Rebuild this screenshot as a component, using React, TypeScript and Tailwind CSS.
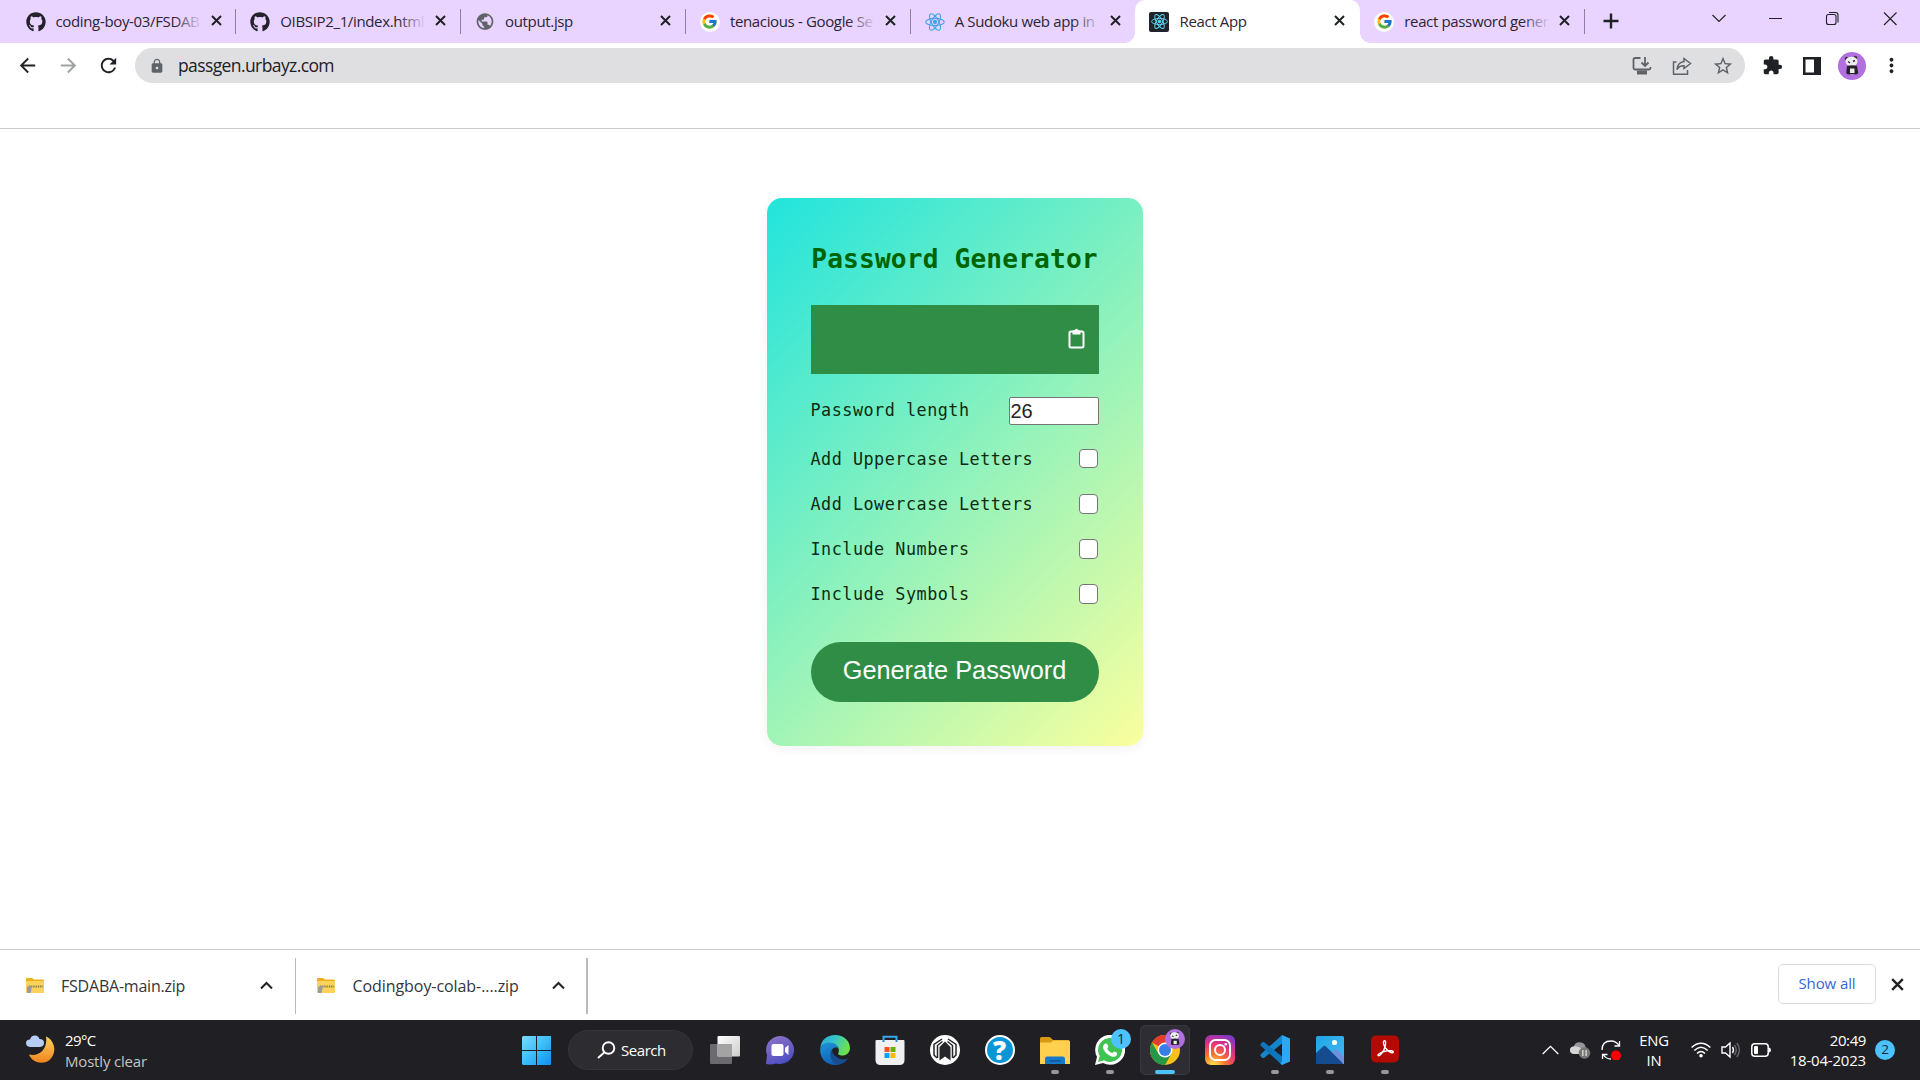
import React from 'react';
import { FaGithub } from 'react-icons/fa';
import { FcGoogle } from 'react-icons/fc';
import { MdArrowBack, MdArrowForward, MdRefresh, MdLock, MdStarOutline, MdExtension, MdMoreVert, MdPublic } from 'react-icons/md';

const Cross = ({ s = 11, w = 2, c = '#202124' }: { s?: number; w?: number; c?: string }) => (
  <svg width={s} height={s} viewBox="0 0 11 11" className="shrink-0">
    <path d="M1 1L10 10M10 1L1 10" stroke={c} strokeWidth={w} fill="none" />
  </svg>
);

const Atom = ({ c, s = 20 }: { c: string; s?: number }) => (
  <svg width={s} height={s + 2} viewBox="0 0 20 22" fill="none" stroke={c} strokeWidth="1.1">
    <ellipse cx="10" cy="11" rx="9.3" ry="3.6" />
    <ellipse cx="10" cy="11" rx="9.3" ry="3.6" transform="rotate(60 10 11)" />
    <ellipse cx="10" cy="11" rx="9.3" ry="3.6" transform="rotate(120 10 11)" />
    <circle cx="10" cy="11" r="1.6" fill={c} />
  </svg>
);

const Google = () => (
  <div className="flex h-5 w-5 items-center justify-center rounded-full bg-white"><FcGoogle size={17} /></div>
);

const Panda = ({ s }: { s: number }) => (
  <svg width={s} height={s} viewBox="0 0 28 28">
    <circle cx="14" cy="14" r="14" fill="#b26fe0" />
    <circle cx="8.500" cy="6.500" r="1.700" fill="#333" /><circle cx="17.500" cy="5.500" r="1.700" fill="#333" />
    <ellipse cx="13.500" cy="9.500" rx="6" ry="4.800" fill="#eee" />
    <path d="M10 9.500L12 11M15 9.500L17 8.500" stroke="#333" strokeWidth="1.500" />
    <path d="M9 14q5-1.500 10 0l1.200 7q-2 2.500-4 1h-4q-2 1.500-4-1z" fill="#252327" />
    <path d="M12 16.500h4.500v4.500h-4.500z" fill="#eee" />
  </svg>
);

function Tab({ icon, label, active, line = true, fade = true }: { icon: React.ReactNode; label: string; active?: boolean; line?: boolean; fade?: boolean }) {
  return (
    <div className={`relative flex h-[43px] w-[224.8px] shrink-0 items-center pl-[14px] ${active ? 'rounded-t-[10px] bg-white' : ''}`}>
      {active && <div className="absolute bottom-0 -left-[10px] h-[10px] w-[10px] bg-[radial-gradient(circle_at_0_0,#e8d4ff_9.500px,#fff_10px)]" />}
      {active && <div className="absolute -right-[10px] bottom-0 h-[10px] w-[10px] bg-[radial-gradient(circle_at_100%_0,#e8d4ff_9.500px,#fff_10px)]" />}
      <div className="flex w-5 shrink-0 justify-center">{icon}</div>
      <div className="relative -top-px ml-[10px] h-5 w-[146px] text-[15px] leading-5 tracking-[-0.35px] whitespace-nowrap text-[#2b2435]">
        {label}
        {fade && <div className="absolute top-0 right-0 h-5 w-7 bg-linear-to-r from-[#e8d4ff]/0 to-[#e8d4ff]" />}
      </div>
      <div className="relative -top-px ml-[9px] flex"><Cross /></div>
      {line && <div className="absolute top-[9px] right-0 h-[25px] w-px bg-[#8f80a2]" />}
    </div>
  );
}

function Tabs() {
  return (
    <div className="flex h-[43px] bg-[#e8d4ff] pl-[11.500px]">
      <Tab icon={<FaGithub size={20} color="#24202c" />} label="coding-boy-03/FSDAB" />
      <Tab icon={<FaGithub size={20} color="#24202c" />} label="OIBSIP2_1/index.html" />
      <Tab icon={<MdPublic size={21} color="#5f6368" />} label="output.jsp" fade={false} />
      <Tab icon={<Google />} label="tenacious - Google Se" />
      <Tab icon={<Atom c="#46a3e8" />} label="A Sudoku web app in" line={false} />
      <Tab icon={<div className="flex h-5 w-5 items-center justify-center rounded-xs bg-[#20232a]"><Atom c="#61dafb" s={17} /></div>} label="React App" active line={false} fade={false} />
      <Tab icon={<Google />} label="react password gener" />
      <svg className="mt-[13px] ml-[18px]" width="16" height="16" viewBox="0 0 16 16" stroke="#202124" strokeWidth="2.4"><path d="M8 0.5V15.500M0.500 8H15.500" /></svg>
      <svg className="mt-[9px] ml-[92px]" width="200" height="20" viewBox="0 0 200 20" fill="none" stroke="#202124" strokeWidth="1.1">
        <path d="M1.500 6L8 12.500L14.500 6M58 9.500H71" />
        <rect x="115.500" y="5.500" width="9.500" height="10" rx="2" />
        <path d="M118 3.500h6.500q2.500 0 2.500 2.500v7.500" />
        <path d="M173 3.500L185.500 16M185.500 3.500L173 16" />
      </svg>
    </div>
  );
}

function Toolbar() {
  return (
    <div className="flex h-[45px] items-center bg-white">
      <div className="ml-[16px] flex items-center gap-[17.500px]">
        <MdArrowBack size={23} color="#202124" />
        <MdArrowForward size={23} color="#a0a1a3" />
        <MdRefresh size={23} color="#202124" />
      </div>
      <div className="ml-[15px] flex h-[35px] w-[1610px] shrink-0 items-center rounded-full bg-[#dfdfe1] pl-[14px]">
        <MdLock size={16} color="#5f6368" />
        <span className="ml-[13px] text-[17.5px] leading-none tracking-[-0.600px] text-[#202124]">passgen.urbayz.com</span>
        <div className="mr-[11px] ml-auto flex items-center gap-[20px]">
          <svg width="20" height="20" viewBox="0 0 20 20" fill="none" stroke="#5f6368" strokeWidth="1.800">
            <path d="M8.500 2H3Q1.500 2 1.500 3.500V12Q1.500 13.500 3 13.500H17Q18.500 13.500 18.500 12V11M13 1V9.500M9.500 6.500L13 10L16.500 6.500" />
            <path d="M5 16.500H15" strokeWidth="4" />
          </svg>
          <svg width="20" height="20" viewBox="0 0 20 20" fill="none" stroke="#5f6368" strokeWidth="1.500">
            <path d="M4.500 6H1.500V18.200H15.500V14M12 2.500L18.500 7.500L12 12.500V9.800Q7.500 9.500 5 13.500Q5.500 6.500 12 5.500Z" />
          </svg>
          <MdStarOutline size={22} color="#5f6368" />
        </div>
      </div>
      <div className="ml-[17px] flex items-center">
        <MdExtension size={21} color="#202124" />
        <svg className="ml-[20px]" width="18" height="18" viewBox="0 0 18 18"><path d="M0 0H18V18H0ZM2.500 2.500V15.500H11V2.500Z" fill="#202124" fillRule="evenodd" /></svg>
        <div className="ml-[17px]"><Panda s={28} /></div>
        <div className="ml-[14px]"><MdMoreVert size={23} color="#202124" /></div>
      </div>
    </div>
  );
}

function Option({ label }: { label: string }) {
  return (
    <div className="flex h-[45.2px] items-center justify-between pr-[0.500px]">
      <label className="mt-[1px] font-['DejaVu_Sans_Mono',monospace] text-[16.800px] leading-none tracking-[0.500px] text-[#0c2c12]">{label}</label>
      <div className="h-[19.500px] w-[19.500px] rounded-[4px] border border-[#767676] bg-white" />
    </div>
  );
}

function Card() {
  return (
    <div className="mt-[69px] ml-[766.500px] h-[547.500px] w-[376px] rounded-[15px] bg-[linear-gradient(135deg,#21e4dc,#faff9e)] px-[44px] pt-[43px] shadow-[0_2px_12px_rgba(0,0,0,0.06)]">
      <h2 className="h-[64px] pt-[1px] text-center font-['DejaVu_Sans_Mono',monospace] text-[26.200px] leading-[34px] font-bold tracking-[0.15px] whitespace-nowrap text-[#006400]">Password Generator</h2>
      <div className="flex h-[69px] items-center justify-end bg-[#308d46] pr-[14px] pb-[2px]">
        <svg width="17" height="21" viewBox="0 0 17 21" fill="none" stroke="#fff" strokeWidth="2">
          <rect x="1.500" y="3.500" width="14" height="16" rx="1.500" />
          <path d="M4.500 2.500H6.300Q8.500-.8 10.700 2.500H12.500V6.500H4.500Z" fill="#fff" stroke="none" />
        </svg>
      </div>
      <div className="mt-[23px] flex h-[28px] items-center justify-between">
        <label className="-mt-[2px] font-['DejaVu_Sans_Mono',monospace] text-[16.800px] leading-none tracking-[0.500px] text-[#0c2c12]">Password length</label>
        <div className="flex h-[28px] w-[90px] items-center rounded-[2px] border border-[#767676] bg-white pb-px pl-px font-['Liberation_Sans',sans-serif] text-[20px] leading-none text-[#222]">26</div>
      </div>
      <div className="mt-[11px] h-[182px]">
        <Option label="Add Uppercase Letters" />
        <Option label="Add Lowercase Letters" />
        <Option label="Include Numbers" />
        <Option label="Include Symbols" />
      </div>
      <button className="mt-[24px] block h-[60px] w-full rounded-full bg-[#308d46] pb-[2px] font-['Liberation_Sans',sans-serif] text-[25.300px] leading-none text-white">Generate Password</button>
    </div>
  );
}

const Zip = () => (
  <svg width="18" height="16" viewBox="0 0 18 16">
    <path d="M0 1Q0 0 1 0H6L8 1.500H17Q18 1.500 18 3V6H0Z" fill="#e9b01c" />
    <rect y="3" width="18" height="12" rx="0.800" fill="#fbd35c" />
    <path d="M3 8.500H17.500" stroke="#77715e" strokeWidth="2" strokeDasharray="1 0.800" />
    <path d="M1 15V10Q1 8 3 8H5.500V11L4.500 15Z" fill="#9b9b9b" />
  </svg>
);
const Up = () => (
  <svg width="13" height="9" viewBox="0 0 13 9" fill="none" stroke="#202124" strokeWidth="2"><path d="M1 7.500L6.500 2L12 7.500" /></svg>
);

function Shelf() {
  return (
    <div className="flex h-[71px] border-t border-[#c9cacc] bg-white text-[#33353a]">
      <div className="mt-[8px] flex h-[56px] w-[296px] items-center border-r border-[#b9babc] pb-px pl-[26px]">
        <Zip /><span className="ml-[17px] w-[199px] text-[16px] tracking-[-0.22px]">FSDABA-main.zip</span><Up />
      </div>
      <div className="mt-[8px] flex h-[56px] w-[292px] items-center border-r-2 border-[#b9babc] pb-px pl-[21px]">
        <Zip /><span className="ml-[17.500px] w-[199px] text-[16px] tracking-[-0.07px]">Codingboy-colab-....zip</span><Up />
      </div>
      <div className="mt-[14px] mr-[16px] ml-auto flex h-[40px] items-center">
        <div className="mr-[15px] flex h-[40px] w-[98px] items-center justify-center rounded-[5px] border border-[#dadce0] pb-px text-[15px] font-medium tracking-[-0.1px] text-[#3367d6]">Show all</div>
        <Cross s={13} w={2} />
      </div>
    </div>
  );
}

const Edge = () => (
  <svg width="30" height="30" viewBox="0 0 30 30">
    <defs>
      <linearGradient id="e1" x1="0" y1="0" x2="1" y2="0.400"><stop offset="0" stopColor="#2aa6df" /><stop offset="0.500" stopColor="#36c6c5" /><stop offset="1" stopColor="#6be04f" /></linearGradient>
      <linearGradient id="e2" x1="0" y1="0" x2="0.500" y2="1"><stop offset="0" stopColor="#2196dd" /><stop offset="1" stopColor="#0f5eb0" /></linearGradient>
    </defs>
    <path d="M0.300 13C1 5 7 0 15 0C24 0 30 6 30 13C30 18 26 20.500 22.500 20.500C19 20.500 17.500 19.500 18.500 17.500C20.500 13 15 8 9 8C5 8 2 10 0.300 13Z" fill="url(#e1)" />
    <path d="M0.200 13.500C2 9.500 5.500 7.500 9 7.500C14 7.500 18 10.500 18.500 13C12 11 10.500 16 12 20C14 25.500 20 28 24 26.200C21.500 28.800 18.500 30 15 30C6 30-.6 23 0.200 13.500Z" fill="url(#e2)" />
    <path d="M12.300 14C9 18 9.500 26 17 29.800C21.500 29.500 25.500 27.500 28 23.200C24.500 25 20 25 16 21.500C13 19 11.500 17 12.300 14Z" fill="#164d91" />
  </svg>
);

function Pinned({ children, dot }: { children: React.ReactNode; dot?: boolean }) {
  return (
    <div className="relative flex h-[60px] w-[55px] shrink-0 items-center justify-center">
      {children}
      {dot && <div className="absolute bottom-[6px] left-[23.500px] h-1 w-2 rounded-full bg-[#98979c]" />}
    </div>
  );
}

function Taskbar() {
  return (
    <div className="flex h-[60px] bg-[#201f23] text-white">
      <div className="flex w-[509px] pl-[25px]">
        <svg className="mt-[14px]" width="30" height="30" viewBox="0 0 30 30">
          <defs><linearGradient id="moon" x1="0" y1="0" x2="0" y2="1"><stop offset="0" stopColor="#ffd35a" /><stop offset="1" stopColor="#ef8420" /></linearGradient></defs>
          <path d="M21 2.500C31 7 32 20 24 26.500C17 31 7 28.500 4 20.500C15 23 23 14 21 2.500Z" fill="url(#moon)" />
          <path d="M5 13Q1 12.500 1 9Q1 5.500 5 5.500Q6 1.500 10 1.500Q13.500 1.500 14.500 5Q19 5 19 9Q19 12.500 15 13Z" fill="#b8cdf4" />
        </svg>
        <div className="mt-[10px] ml-[10px] text-[15px] leading-[20.500px] tracking-[-0.18px]"><div className="tracking-[-0.600px]">29°C</div><div className="text-[#c5c5c5]">Mostly clear</div></div>
      </div>
      <Pinned>
        <svg width="29" height="29" viewBox="0 0 29 29"><defs><linearGradient id="win" gradientUnits="userSpaceOnUse" x1="0" y1="0" x2="29" y2="29"><stop offset="0" stopColor="#7bdcff" /><stop offset="0.500" stopColor="#3cbdf8" /><stop offset="1" stopColor="#0a90f5" /></linearGradient></defs><path d="M1 0H14V14H0V1ZM15 0H29V14H15ZM0 15H14V29H1L0 28ZM15 15H29V29H15Z" fill="url(#win)" /></svg>
      </Pinned>
      <div className="mt-[10px] mr-[4px] ml-[4px] flex h-[40px] w-[125px] items-center rounded-full border border-[#353439] bg-[#2d2c31] pl-[28px]">
        <svg width="19" height="18" viewBox="0 0 19 18" fill="none" stroke="#fff" strokeWidth="1.900"><circle cx="11.500" cy="7" r="5.800" /><path d="M7.500 11.200L1 17" /></svg>
        <span className="ml-[5px] text-[15px] tracking-[-0.450px]">Search</span>
      </div>
      <Pinned>
        <svg width="30" height="28" viewBox="0 0 30 28"><defs><linearGradient id="tv" x1="0" y1="0" x2="1" y2="1"><stop offset="0" stopColor="#fff" /><stop offset="1" stopColor="#ccc" /></linearGradient></defs><rect y="8" width="22" height="20" rx="1" fill="#6b6b6d" /><rect x="7.500" y="0" width="22.500" height="20.500" rx="1" fill="url(#tv)" /><path d="M7.500 8H22V20.500H7.500Z" fill="#a3a3a4" /></svg>
      </Pinned>
      <Pinned>
        <svg width="30" height="30" viewBox="0 0 30 30"><defs><linearGradient id="chat" x1="0" y1="0" x2="0.500" y2="1"><stop offset="0" stopColor="#9276c6" /><stop offset="1" stopColor="#4f4fc4" /></linearGradient></defs><path d="M15 1A14.300 14 0 1 1 11 28.500Q6 30 1 29L2 20A14 14 0 0 1 15 1Z" fill="url(#chat)" /><rect x="6.500" y="9" width="12" height="12" rx="2" fill="#fff" /><path d="M20 13L23.500 10V20L20 17Z" fill="#fff" /></svg>
      </Pinned>
      <Pinned><Edge /></Pinned>
      <Pinned>
        <svg width="30" height="30" viewBox="0 0 30 30"><path d="M8.500 8V1.800H21.500V8" fill="none" stroke="#35aae8" strokeWidth="2" /><path d="M0.500 6Q0.500 5 1.500 5H28.500Q29.500 5 29.500 6V25Q29.500 30 24.500 30H5.500Q0.500 30 0.500 25Z" fill="#f0f0f0" /><path d="M8.500 5V7M21.500 5V7" stroke="#2788d2" strokeWidth="2" /><path d="M9.500 12H14.500V17H9.500Z" fill="#f25022" /><path d="M15.500 12H20.500V17H15.500Z" fill="#6dad00" /><path d="M9.500 18H14.500V23H9.500Z" fill="#00a4ef" /><path d="M15.500 18H20.500V23H15.500Z" fill="#ffb900" /></svg>
      </Pinned>
      <Pinned>
        <svg width="30" height="30" viewBox="0 0 30 30"><circle cx="15" cy="15" r="15" fill="#fff" /><g fill="none" stroke="#26252a"><path d="M12 4L4 9.500V20L7 23M18 4L26 9.500V20L23 23" strokeWidth="1.500" /><path d="M12.500 6.500L7.500 10.500V23M17.500 6.500L22.500 10.500V23" strokeWidth="1.500" /></g><path d="M9.500 12L15 6.500L20.500 12V25.500L15 21.500L9.500 25.500Z" fill="#26252a" /></svg>
      </Pinned>
      <Pinned>
        <div className="flex h-[30px] w-[30px] items-center justify-center rounded-full border-2 border-white bg-[#0a96d6] font-['Open_Sans',sans-serif] text-[26px] leading-none font-extrabold">?</div>
      </Pinned>
      <Pinned dot>
        <svg width="30" height="27" viewBox="0 0 30 27"><path d="M0 1.500Q0 0 1.500 0H9Q10 0 11 1L13 3H28Q30 3 30 5V10H0Z" fill="#d89a13" /><path d="M0 5.500H11L13 3.500H28.500Q30 3.500 30 5V27H0Z" fill="#fed04d" /><path d="M5 27V22Q5 19.500 7.500 19.500H22.500Q25 19.500 25 22V27Z" fill="#1777c8" /><path d="M9.500 24H20.500" stroke="#0c579a" strokeWidth="1.500" /></svg>
      </Pinned>
      <Pinned dot>
        <svg width="30" height="30" viewBox="0 0 30 30"><path d="M0 30L2 22A15 15 0 1 1 8 28Z" fill="#fff" /><path d="M3 27L4.700 21A12 12 0 1 1 9 25.300Z" fill="#3fc351" /><path d="M10.500 8.500C12 8 12.500 9 13.300 11.500C13.500 12.500 12 13.200 12.300 14C13.500 16 15 17.300 17 18C18 18.200 18.500 16.200 19.500 16.500C22 17.500 22.500 18 22 19.500C21 22 18.500 22.200 16 21.200C12 19.700 9.700 17 8.300 14C7.500 11.500 8.500 9 10.500 8.500Z" fill="#fff" /></svg>
        <div className="absolute top-[9px] left-[29px] flex h-5 w-5 items-center justify-center rounded-full bg-[#4cc2ff] text-[14px] leading-none text-[#152a36]">1</div>
      </Pinned>
      <div className="relative flex h-[60px] w-[55px] shrink-0 items-center justify-center">
        <div className="absolute top-[5px] left-[2.500px] h-[50px] w-[50px] rounded-[5px] border border-[#39383d] bg-[#2e2d33]" />
        <svg className="relative" width="30" height="30" viewBox="0 0 30 30"><circle cx="15" cy="15" r="15" fill="#fbc116" /><path d="M15 15L2 7.500A15 15 0 0 1 28 7.500H15Z" fill="#e33b2e" /><path d="M2 7.500A15 15 0 0 0 15 30L21.500 18.800L15 15L8.500 18.800Z" fill="#279847" /><circle cx="15" cy="15" r="7.500" fill="#fff" /><circle cx="15" cy="15" r="6" fill="#397ee8" /></svg>
        <div className="absolute top-[9px] left-[28px]"><Panda s={20} /></div>
        <div className="absolute bottom-[6px] left-[17.500px] h-1 w-5 rounded-full bg-[#4cc2ff]" />
      </div>
      <Pinned>
        <div className="flex h-[30px] w-[30px] items-center justify-center rounded-[6px] bg-[radial-gradient(circle_at_28%_105%,#ffd54a_8%,#f9752f_32%,#e2317f_62%,#8338c5_88%,#5a50d8_100%)]">
          <svg width="22" height="22" viewBox="0 0 22 22" fill="none" stroke="#fff" strokeWidth="2"><rect x="1" y="1" width="20" height="20" rx="5.500" /><circle cx="11" cy="11" r="5" /><circle cx="16.800" cy="5.200" r="1.300" fill="#fff" stroke="none" /></svg>
        </div>
      </Pinned>
      <Pinned dot>
        <svg width="30" height="30" viewBox="0 0 30 30"><path d="M22 0L0.500 19.500V21L2.500 23L4 23L22 8.500Z" fill="#1686cc" /><path d="M22 30L0.500 10.500V9L2.500 7L4 7L22 21.500Z" fill="#0f76bd" /><path d="M22 0L30 3.500V26.500L22 30L20.500 28.500L22 26Z" fill="#2ba7f3" /></svg>
      </Pinned>
      <Pinned dot>
        <svg width="28" height="28" viewBox="0 0 28 28"><defs><linearGradient id="sky" x1="0" y1="0" x2="1" y2="1"><stop offset="0" stopColor="#1ea7e6" /><stop offset="1" stopColor="#48b6f5" /></linearGradient></defs><rect width="28" height="28" rx="1.500" fill="url(#sky)" /><path d="M10 22L18 14Q19.500 12.500 21 14L28 21V28H12Z" fill="#7290de" /><path d="M0 17L7 10.500Q8.500 9 10 10.500L27 27.500L26 28H0Z" fill="#154c90" /><circle cx="18.500" cy="6.500" r="2.600" fill="#fff" /></svg>
      </Pinned>
      <Pinned dot>
        <svg className="relative -top-px" width="28" height="28" viewBox="0 0 28 28"><rect y="0.500" width="28" height="27" rx="5" fill="#b30b00" /><path d="M13 6C15 5 15 8.500 14 12C12.500 17 9 21 7.500 20.700C5.500 20 10 17 14 16.200C19 15.200 22.500 15.500 22.200 17.200C21.500 19 17 16.500 14.500 13C12.500 10 11.800 6.500 13 6Z" fill="none" stroke="#fff" strokeWidth="1.400" /></svg>
      </Pinned>
      <div className="ml-auto flex h-[60px] items-center pr-[25px]">
        <svg width="17" height="10" viewBox="0 0 17 10" fill="none" stroke="#fff" strokeWidth="1.300"><path d="M0.700 9L8.500 1.300L16.300 9" /></svg>
        <svg className="ml-[11px]" width="21" height="18" viewBox="0 0 21 18"><path d="M5 13Q0 13 0 9Q0 6 3.500 5.500Q6 0 11 1.500Q15 2 15.500 6Q18 7 18 10L12 13Z" fill="#979797" /><path d="M3.500 13Q0 12.500 0 9Q0 5.500 4 5.500Q8 4.500 12 8L10 13Z" fill="#d4d4d4" /><circle cx="14.500" cy="12" r="5.800" fill="#777" /><path d="M12.900 9V15M16.100 9V15" stroke="#fff" /></svg>
        <svg className="ml-[10px]" width="21" height="20" viewBox="0 0 21 20" fill="none" stroke="#fff" strokeWidth="1.300"><path d="M1 10Q1 1 10 1Q15 1 18 5.500M18.500 1V6H13.500M1.500 19V14.500H6.500M2 14.500Q5 19 10 19" /><circle cx="15" cy="15.500" r="5" fill="#f00" stroke="none" /></svg>
        <div className="ml-[17px] w-[30px] text-center text-[14.800px] leading-[20px] tracking-[-0.2px]"><div>ENG</div><div>IN</div></div>
        <svg className="ml-[22px]" width="20" height="16" viewBox="0 0 20 16" fill="none" stroke="#fff" strokeWidth="1.500"><path d="M0.600 5.500Q10-3 19.400 5.500M3.300 8.500Q10 2 16.700 8.500M6 11.500Q10 7.500 14 11.500" /><circle cx="10" cy="13.700" r="1.800" fill="#fff" stroke="none" /></svg>
        <svg className="ml-[10px]" width="20" height="18" viewBox="0 0 20 18" fill="none" stroke="#fff" strokeWidth="1.400"><path d="M1 6H4.500L9 2V16L4.500 12H1ZM11.500 6Q13.500 9 11.500 12" /><path d="M13.500 4Q17 9 13.500 14M15.800 2Q21 9 15.800 16" stroke="#66656a" /></svg>
        <svg className="ml-[10px]" width="20" height="14" viewBox="0 0 20 14"><rect x="0.800" y="0.800" width="16.400" height="12.400" rx="3" fill="none" stroke="#fff" strokeWidth="1.500" /><rect x="3" y="3" width="4" height="8" rx="1" fill="#fff" /><path d="M18 4.500Q20 5 20 7Q20 9 18 9.500Z" fill="#fff" /></svg>
        <div className="ml-[18px] w-[77px] text-right text-[15px] leading-[20px] tracking-[-0.200px]"><div className="tracking-[-0.400px]">20:49</div><div>18-04-2023</div></div>
        <div className="ml-[9px] flex h-5 w-5 items-center justify-center rounded-full bg-[#4cc2ff] text-[13.500px] leading-none text-[#152a36]">2</div>
      </div>
    </div>
  );
}

export default function App() {
  return (
    <div className="flex h-[1080px] w-[1920px] flex-col overflow-hidden bg-white font-['Open_Sans',sans-serif]">
      <Tabs />
      <Toolbar />
      <div className="h-[41px] border-b border-[#c9cacc]" />
      <main className="h-[820px]"><Card /></main>
      <Shelf />
      <Taskbar />
    </div>
  );
}
